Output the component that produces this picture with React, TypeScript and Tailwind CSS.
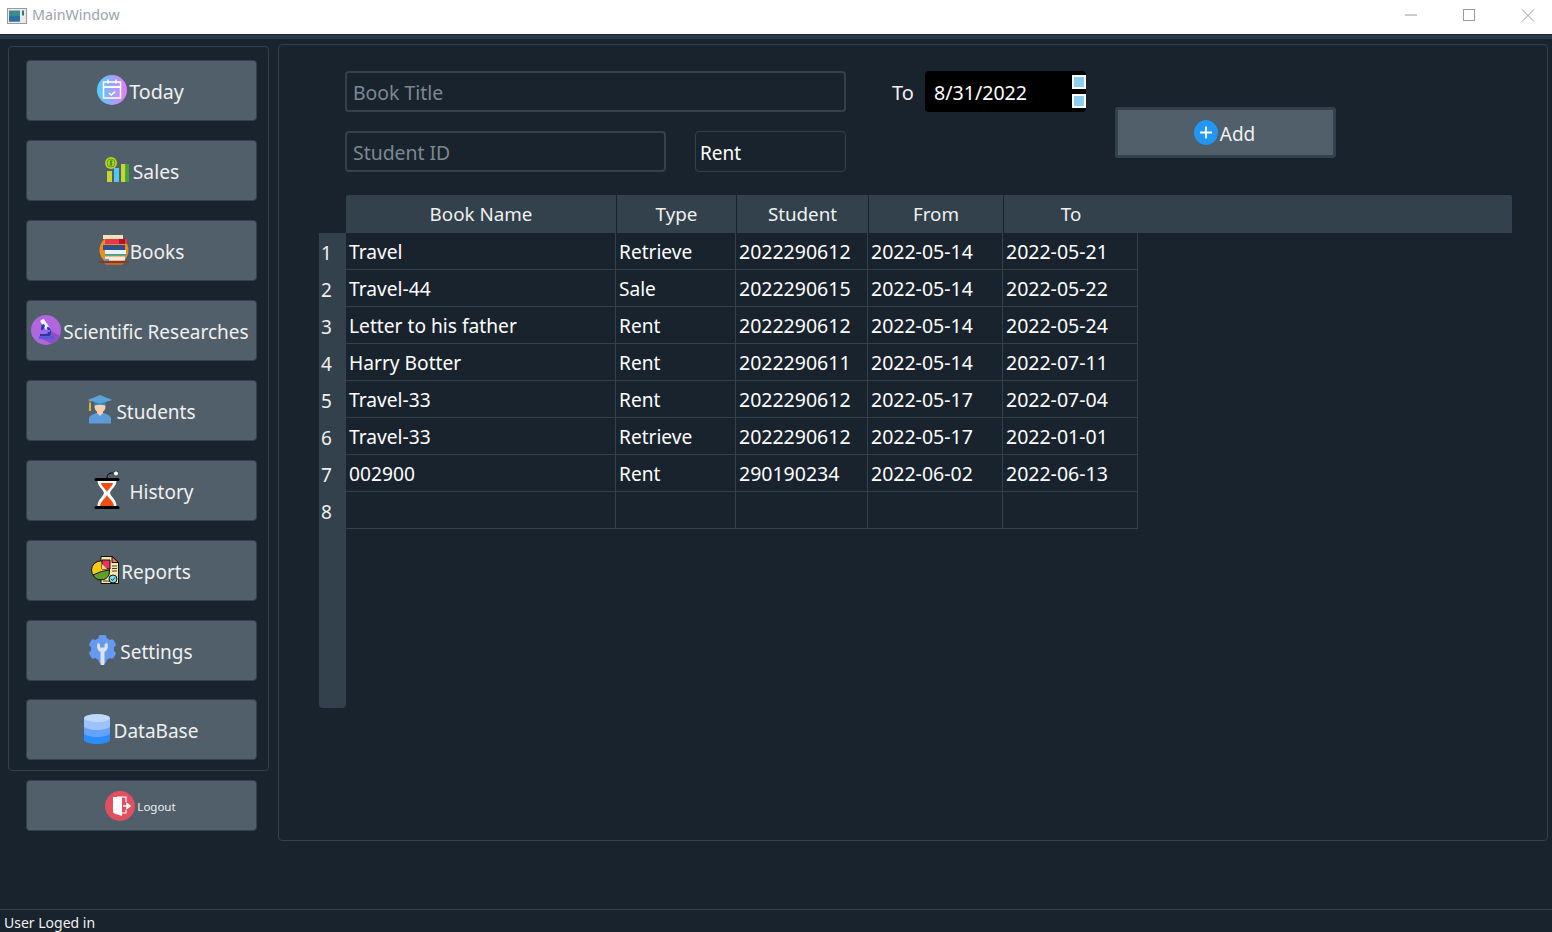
import React from "react";

const font = { fontFamily: '"Noto Sans", "Open Sans", sans-serif' };

const IconToday = () => (
  <svg width="30" height="30" viewBox="0 0 30 30">
    <defs>
      <linearGradient id="td" x1="0" y1="0" x2="1" y2="0">
        <stop offset="0" stopColor="#4fd0ff" />
        <stop offset="1" stopColor="#e47cf5" />
      </linearGradient>
    </defs>
    <circle cx="15" cy="15" r="15" fill="url(#td)" />
    <rect x="6.500" y="7" width="17" height="16" fill="none" stroke="#fff" strokeWidth="1.500" />
    <path d="M6.500 12h17" stroke="#fff" strokeWidth="2" />
    <path d="M11 4.500v4M19 4.500v4" stroke="#fff" strokeWidth="1.500" />
    <path d="M12 18l2.200 2 4-3.500" fill="none" stroke="#fff" strokeWidth="1.600" />
  </svg>
);
const IconSales = () => (
  <svg width="26" height="26" viewBox="0 0 26 26">
    <rect x="3" y="14" width="5" height="11" fill="#c8d62a" />
    <rect x="10" y="11" width="5" height="14" fill="#4fc8f5" />
    <rect x="17" y="7" width="4.500" height="18" fill="#c8d62a" />
    <rect x="21.500" y="7" width="3.500" height="18" fill="#3fa33f" />
    <circle cx="7" cy="6" r="6" fill="#b9d41d" />
    <circle cx="7" cy="6" r="4" fill="none" stroke="#5d9c2a" strokeWidth="1" />
    <path d="M8.600 4.200H6.300v1.800h1.500v1.800H5.400M7 3v6" fill="none" stroke="#3a8a2a" strokeWidth="1" />
  </svg>
);
const IconBooks = () => (
  <svg width="30" height="30" viewBox="0 0 30 30">
    <circle cx="15" cy="15" r="14.500" fill="#f08c1a" />
    <path d="M4 27h22a14.500 14.500 0 0 1-22 0z" fill="#b8673a" />
    <rect x="4" y="0" width="20" height="4" fill="#f3e3b8" />
    <rect x="6" y="4" width="22" height="5" fill="#e9384a" />
    <rect x="20" y="4" width="6" height="5" fill="#b5122a" />
    <rect x="4" y="10" width="22" height="5" fill="#2f4f8f" />
    <rect x="6" y="15" width="21" height="5" fill="#e9f3f3" />
    <rect x="6" y="19" width="21" height="1.500" fill="#25a5a5" />
    <rect x="6" y="21.500" width="20" height="4" fill="#f6e7e2" />
    <rect x="6" y="24" width="4" height="3" fill="#35a4e0" />
    <rect x="0" y="26" width="30" height="2" fill="#8a3a1c" />
  </svg>
);
const IconMicro = () => (
  <svg width="30" height="30" viewBox="0 0 30 30">
    <circle cx="15" cy="15" r="15" fill="#b066dd" />
    <path d="M18 15l11 6a15 15 0 0 1-8 8l-10-5z" fill="#8f4fc4" />
    <path d="M9 6l3.500-2.500 6 9-3.500 2.500z" fill="#f3f3ff" />
    <path d="M17 11.500a7 7 0 0 1 2 9.500H9v-2h7.500a5 5 0 0 0-1-6z" fill="#2a35b0" />
    <path d="M10.500 10l2.500-1 1 2-2 4h-2z" fill="#2a35b0" />
    <rect x="8" y="21" width="15" height="3" fill="#5a5ad8" />
    <rect x="13" y="15" width="6" height="2" fill="#6a7bff" />
  </svg>
);
const IconStudent = () => (
  <svg width="26" height="29" viewBox="0 0 26 29">
    <path d="M2 23c1-3 5-4 7-5h8c2 1 6 2 7 5v5.500H2z" fill="#5d9bd8" />
    <path d="M10 15h6v3l-3 3-3-3z" fill="#f4cfb2" />
    <circle cx="13" cy="12" r="5.500" fill="#f4cfb2" />
    <path d="M7.500 6h11v4.500c-3-1-8-1-11 0z" fill="#3a86c0" />
    <path d="M0.500 5L13 0 25.500 5 13 8.500z" fill="#5aa3d8" />
    <rect x="2.500" y="5" width="1" height="8" fill="#d0a030" />
    <rect x="2" y="8" width="2" height="8" fill="#e2b33c" />
  </svg>
);
const IconHistory = () => (
  <svg width="26" height="38" viewBox="0 0 26 38">
    <path d="M13 7c0-3 1-5 6-5" fill="none" stroke="#000" strokeWidth="1" />
    <circle cx="22" cy="2.500" r="2.500" fill="#fff" stroke="#000" strokeWidth="0.600" />
    <path d="M3.500 9h19c0 7-5 8-6.500 13 1.500 5 6.500 6 6.500 14h-19c0-8 5-9 6.500-14-1.500-5-6.500-6-6.500-13z" fill="#fff" />
    <rect x="0.500" y="7" width="25" height="3" rx="1.500" fill="#000" />
    <rect x="0.500" y="35" width="25" height="3" rx="1.500" fill="#000" />
    <path d="M7 12h12c-1 4-5 6-6 9-1-3-5-5-6-9z" fill="#f04c14" />
    <path d="M13 24c1 3 6 5 7 11H6c1-6 6-8 7-11z" fill="#f04c14" />
  </svg>
);
const IconReports = () => (
  <svg width="28" height="28" viewBox="0 0 28 28">
    <path d="M10 .5h11l6.500 5.500v21.500H10z" fill="#fae7a5" stroke="#111" strokeWidth="1" />
    <path d="M21 .5v6h6.500z" fill="#f4745a" stroke="#111" strokeWidth="1" />
    <path d="M21 10h5M21 12.500h5M21 15h5M12 25h8" stroke="#111" strokeWidth="0.800" />
    <circle cx="9.500" cy="14" r="9" fill="#f7c816" stroke="#111" strokeWidth="1" />
    <path d="M2 19a9 9 0 0 0 16 0l.500-5-8 1.500z" fill="#5fa02c" stroke="#111" strokeWidth="1" />
    <path d="M11 4l8 0v9l-8 0z" fill="#e8335a" stroke="#111" strokeWidth="1" />
    <path d="M11 8l5 5h-5z" fill="#f8d0a0" />
    <circle cx="22" cy="23" r="4" fill="#7adcee" stroke="#111" strokeWidth="1" />
    <path d="M20 23l1.500 1.500 2.500-3" fill="none" stroke="#111" strokeWidth="0.800" />
  </svg>
);
const IconSettings = () => (
  <svg width="29" height="30" viewBox="0 0 29 30">
    <g fill="#659af0">
      <circle cx="14.500" cy="14" r="11.500" />
      <rect x="10.500" y="0" width="8" height="28" rx="2" />
      <rect x="10.500" y="0" width="8" height="28" rx="2" transform="rotate(60 14.500 14)" />
      <rect x="10.500" y="0" width="8" height="28" rx="2" transform="rotate(120 14.500 14)" />
    </g>
    <path d="M10 7.500c-2 4-.5 8 2.500 9.500v12c0 .500.500 1 1 1h2c.500 0 1-.500 1-1V17c3-1.500 4.500-5.500 2.500-9.500l-2.500 2v3h-4.500v-3z" fill="#dbe2ea" />
  </svg>
);
const IconDb = () => (
  <svg width="26" height="30" viewBox="0 0 26 30">
    <path d="M0 4v22c0 2.200 5.800 4 13 4s13-1.800 13-4V4z" fill="#2b8cff" />
    <path d="M0 4v15c0 2.200 5.800 4 13 4s13-1.800 13-4V4z" fill="#62a3fb" />
    <path d="M0 4v8c0 2.200 5.800 4 13 4s13-1.800 13-4V4z" fill="#9dc3fb" />
    <ellipse cx="13" cy="4" rx="13" ry="4" fill="#bfd8fd" />
  </svg>
);
const IconLogout = () => (
  <svg width="30" height="30" viewBox="0 0 30 30">
    <circle cx="15" cy="15" r="15" fill="#e2505f" />
    <path d="M8 6h9v19l-6-2c-2-.500-3-1-3-3z" fill="#fff" />
    <path d="M12 6h9v5M21 19v3h-4" fill="none" stroke="#fff" strokeWidth="1.200" />
    <path d="M18 15h6M22 12.500l3 2.500-3 2.500z" stroke="#fff" strokeWidth="1.500" fill="#fff" />
  </svg>
);
const IconAdd = () => (
  <svg width="24" height="25" viewBox="0 0 24 25">
    <ellipse cx="12" cy="12.500" rx="12" ry="12.500" fill="#2196f3" />
    <path d="M12 6.500v12M6 12.500h12" stroke="#fff" strokeWidth="1.800" />
  </svg>
);

const nav: [React.ReactNode, string, string, string][] = [
  [<IconToday />, "Today", "gap-[2px] pr-[2px] text-[19.700px]", "pt-[2px]"],
  [<IconSales />, "Sales", "gap-[3px] text-[19.300px]", "pt-[2px]"],
  [<IconBooks />, "Books", "gap-[1px]", "pt-[4px]"],
  [<IconMicro />, "Scientific Researches", "gap-[2px] pr-[3px]", "pt-[4px]"],
  [<IconStudent />, "Students", "gap-[3px]", "pt-[4px]"],
  [<IconHistory />, "History", "gap-[10px] pl-[4px]", "pt-[4px]"],
  [<IconReports />, "Reports", "gap-[2px] pr-[1px]", "pt-[4px]"],
  [<IconSettings />, "Settings", "gap-[3px] pr-[2px]", "pt-[4px]"],
  [<IconDb />, "DataBase", "gap-[4px] pr-[1px]", "pt-[4px]"],
];

const rows = [
  ["Travel", "Retrieve", "2022290612", "2022-05-14", "2022-05-21"],
  ["Travel-44", "Sale", "2022290615", "2022-05-14", "2022-05-22"],
  ["Letter to his father", "Rent", "2022290612", "2022-05-14", "2022-05-24"],
  ["Harry Botter", "Rent", "2022290611", "2022-05-14", "2022-07-11"],
  ["Travel-33", "Rent", "2022290612", "2022-05-17", "2022-07-04"],
  ["Travel-33", "Retrieve", "2022290612", "2022-05-17", "2022-01-01"],
  ["002900", "Rent", "290190234", "2022-06-02", "2022-06-13"],
  ["", "", "", "", ""],
];

const colW = [
  "w-[270px] text-[19.200px] pt-[1px]",
  "w-[120px] text-[19.100px] pt-[3px]",
  "w-[132px] text-[19.500px] pt-[1px]",
  "w-[135px] text-[19.500px] pt-[1px]",
  "w-[135px] text-[19.500px] pt-[1px]",
];
const headW = ["w-[271px]", "w-[120px]", "w-[132px]", "w-[135px]", "w-[134px]"];
const heads = ["Book Name", "Type", "Student", "From", "To"];

export default function App() {
  return (
    <div style={font} className="w-[1552px] h-[932px] overflow-hidden flex flex-col bg-[#19232d] text-[#f0f0f0] text-[19px] leading-none">
      <div className="h-[34px] bg-white flex items-center shrink-0">
        <svg className="ml-[7px] -mt-[3px]" width="20" height="16" viewBox="0 0 20 16">
          <rect x="0.500" y="0.500" width="19" height="15" fill="#e8eaee" stroke="#9a9a9a" />
          <rect x="2" y="2.500" width="11" height="11" fill="#3f8a8a" />
          <rect x="2" y="8" width="11" height="5.500" fill="#2f6f9f" />
          <rect x="15" y="2.500" width="2" height="5" fill="#3a7a6a" />
        </svg>
        <span className="ml-[5px] -mt-[4px] text-[14.300px] text-[#9aa3ad]">MainWindow</span>
        <div className="ml-auto mr-[2px] flex items-center">
          <svg width="150" height="34" viewBox="0 0 150 34">
            <path d="M5 15h12" stroke="#9a9a9a" />
            <rect x="63.500" y="9.500" width="11" height="11" fill="none" stroke="#9a9a9a" />
            <path d="M122 9.500l12 12M134 9.500l-12 12" stroke="#9a9a9a" />
          </svg>
        </div>
      </div>
      <div className="h-[1px] bg-[#19232d] shrink-0" />
      <div className="h-[4px] bg-[#2b3a46] shrink-0" />

      <div className="flex-1 flex items-start pl-[8px]">
        <div className="w-[270px] shrink-0 pt-[7px]">
          <div className="w-[261px] h-[725px] border border-[#32414b] rounded-[4px] pl-[17px] pt-[13px] flex flex-col gap-[19px]">
            {nav.map(([icon, label, cls, pt], i) => (
              <button
                key={label}
                className={`w-[231px] h-[61px] shrink-0 bg-[#505f69] border border-[#32414b] rounded-[4px] flex items-center justify-center ${cls} ${i === 8 ? "-mt-[1px]" : ""}`}
              >
                <span className="flex mb-[2px]">{icon}</span>
                <span className={pt}>{label}</span>
              </button>
            ))}
          </div>
          <button className="ml-[18px] mt-[9px] w-[231px] h-[51px] bg-[#505f69] border border-[#32414b] rounded-[4px] flex items-center justify-center gap-[2px] pr-[2px]">
            <IconLogout />
            <span className="text-[11.500px] pt-[2px]">Logout</span>
          </button>
        </div>

        <div className="mt-[5px] w-[1270px] h-[797px] border border-[#32414b] rounded-[4px]">
          <div className="flex pl-[66px] pt-[26px]">
            <div className="w-[741px]">
              <div className="flex items-center h-[41px]">
                <div className="w-[501px] h-[41px] border-2 border-[#32414b] rounded-[4px] flex items-center pl-[6px] pt-[2px] text-[19.400px] text-[#7c8891]">Book Title</div>
                <span className="ml-[46px] w-[33px] pt-[2px] text-[20px]">To</span>
                <div className="w-[161px] h-[41px] bg-black rounded-[4px] flex items-center justify-between pl-[9px] text-white">
                  <span className="pt-[2px] text-[19.600px]">8/31/2022</span>
                  <div className="flex flex-col justify-between h-[41px] py-[4px]">
                    <div className="w-[14px] h-[14px] bg-[#8ccdf0] border-2 border-white" />
                    <div className="w-[14px] h-[14px] bg-[#8ccdf0] border-2 border-white" />
                  </div>
                </div>
              </div>
              <div className="flex items-center h-[41px] mt-[19px]">
                <div className="w-[321px] h-[41px] border-2 border-[#32414b] rounded-[4px] flex items-center pl-[6px] pt-[2px] text-[19.400px] text-[#7c8891]">Student ID</div>
                <div className="ml-[29px] w-[151px] h-[41px] border border-[#32414b] rounded-[4px] flex items-center pl-[4px] pt-[4px] text-white">Rent</div>
              </div>
            </div>
            <button className="ml-[29px] mt-[36px] w-[221px] h-[51px] bg-[#505f69] border-[3px] border-[#32414b] rounded-[3px] flex items-center justify-center gap-[2px] pr-[2px]">
              <IconAdd />
              <span className="pt-[4px]">Add</span>
            </button>
          </div>

          <div className="flex ml-[40px] mt-[23px]">
            <div className="w-[27px] mt-[38px] h-[475px] bg-[#32414b] rounded-b-[4px]">
              {rows.map((_, i) => (
                <div key={i} className="h-[37px] flex items-center pl-[2px] pt-[3px]">{i + 1}</div>
              ))}
            </div>
            <div className="w-[1166px]">
              <div className="flex h-[38px] bg-[#32414b] rounded-t-[2px] text-[18.800px]">
                {heads.map((h, i) => (
                  <div key={h} className={`${headW[i]} h-full flex items-center justify-center pt-[1px] border-r border-[#19232d] ${i === 4 ? "border-r-0" : ""}`}>{h}</div>
                ))}
              </div>
              {rows.map((r, i) => (
                <div key={i} className="flex h-[37px]">
                  {r.map((c, j) => (
                    <div key={j} className={`${colW[j]} h-full border-r border-b border-[#32414b] pl-[3px] flex items-center text-white whitespace-nowrap`}>{c}</div>
                  ))}
                </div>
              ))}
            </div>
          </div>
        </div>
      </div>

      <div className="h-[23px] shrink-0 border-t border-[#32414b] pl-[4px] flex items-center pt-[4px] text-[14px] text-[#f0f0f0]">User Loged in</div>
    </div>
  );
}
